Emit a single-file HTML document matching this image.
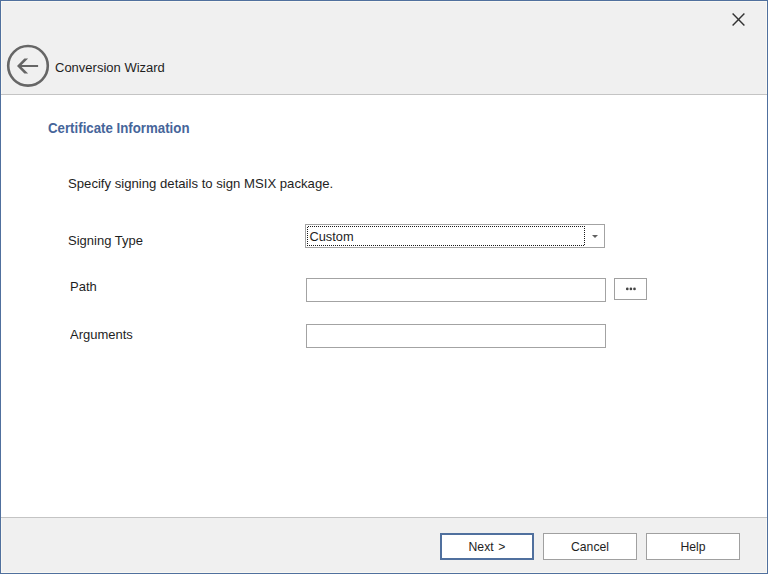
<!DOCTYPE html>
<html>
<head>
<meta charset="utf-8">
<style>
html,body{margin:0;padding:0;}
body{width:768px;height:574px;position:relative;overflow:hidden;background:#f0f0f0;font-family:"Liberation Sans",sans-serif;color:#1e1e1e;}
.abs{position:absolute;}
#frame{left:0;top:0;width:766px;height:572px;border:1px solid #50709e;}
#inner{left:1px;top:1px;width:766px;height:572px;border:1px solid #f9f8f3;box-sizing:border-box;}
#header{left:2px;top:2px;width:764px;height:92px;background:#f0f0f0;}
#sep1{left:1px;top:94px;width:766px;height:1px;background:#c4c4c4;}
#content{left:1px;top:95px;width:766px;height:422px;background:#ffffff;}
#sep2{left:1px;top:517px;width:766px;height:1px;background:#c4c4c4;}
.t{position:absolute;white-space:nowrap;font-size:13px;line-height:15px;}
.box{position:absolute;box-sizing:border-box;border:1px solid #a3a3a3;background:#fff;}
.btn{position:absolute;box-sizing:border-box;border:1px solid #a0a0a0;background:#fff;font-size:12.2px;text-align:center;}
</style>
</head>
<body>
<div id="frame" class="abs"></div>
<div id="inner" class="abs"></div>
<div id="sep1" class="abs"></div>
<div id="content" class="abs"></div>
<div id="sep2" class="abs"></div>

<!-- back icon -->
<svg class="abs" style="left:0;top:38px" width="56" height="56" viewBox="0 38 56 56">
  <circle cx="28" cy="65.8" r="19.8" fill="none" stroke="#666" stroke-width="2.6"/>
  <path d="M18 65 L38.1 65 L38.1 67 L18 67 Z M24.4 58.6 L28.1 58.6 L20.6 66 L28.1 73.4 L24.4 73.4 L17 66 Z" fill="#666"/>
</svg>
<div class="t" style="left:55px;top:59.6px;font-size:13.7px;transform:scaleX(0.95);transform-origin:0 0;">Conversion Wizard</div>

<!-- close -->
<svg class="abs" style="left:726px;top:8px" width="24" height="24" viewBox="726 8 24 24">
  <path d="M732.6 13.6 L744.4 25.4 M744.4 13.6 L732.6 25.4" fill="none" stroke="#333" stroke-width="1.45"/>
</svg>

<div class="t" style="left:47.5px;top:121px;font-size:14.2px;font-weight:bold;color:#46659a;transform:scaleX(0.935);transform-origin:0 0;">Certificate Information</div>
<div class="t" style="left:68px;top:176px;font-size:13.15px;">Specify signing details to sign MSIX package.</div>

<div class="t" style="left:68px;top:233px;font-size:13.6px;transform:scaleX(0.956);transform-origin:0 0;">Signing Type</div>
<div class="t" style="left:70px;top:279px;font-size:13.6px;transform:scaleX(0.956);transform-origin:0 0;">Path</div>
<div class="t" style="left:70px;top:327px;font-size:13.6px;transform:scaleX(0.956);transform-origin:0 0;">Arguments</div>

<!-- combobox -->
<div class="box" style="left:305px;top:224px;width:300px;height:24px;"></div>
<svg class="abs" style="left:300px;top:220px" width="290" height="30" viewBox="300 220 290 30"><path d="M307 227h1v1h-1zM307 229h1v1h-1zM307 231h1v1h-1zM307 233h1v1h-1zM307 235h1v1h-1zM307 237h1v1h-1zM307 239h1v1h-1zM307 241h1v1h-1zM307 243h1v1h-1zM307 245h1v1h-1zM308 226h1v1h-1zM309 245h1v1h-1zM310 226h1v1h-1zM311 245h1v1h-1zM312 226h1v1h-1zM313 245h1v1h-1zM314 226h1v1h-1zM315 245h1v1h-1zM316 226h1v1h-1zM317 245h1v1h-1zM318 226h1v1h-1zM319 245h1v1h-1zM320 226h1v1h-1zM321 245h1v1h-1zM322 226h1v1h-1zM323 245h1v1h-1zM324 226h1v1h-1zM325 245h1v1h-1zM326 226h1v1h-1zM327 245h1v1h-1zM328 226h1v1h-1zM329 245h1v1h-1zM330 226h1v1h-1zM331 245h1v1h-1zM332 226h1v1h-1zM333 245h1v1h-1zM334 226h1v1h-1zM335 245h1v1h-1zM336 226h1v1h-1zM337 245h1v1h-1zM338 226h1v1h-1zM339 245h1v1h-1zM340 226h1v1h-1zM341 245h1v1h-1zM342 226h1v1h-1zM343 245h1v1h-1zM344 226h1v1h-1zM345 245h1v1h-1zM346 226h1v1h-1zM347 245h1v1h-1zM348 226h1v1h-1zM349 245h1v1h-1zM350 226h1v1h-1zM351 245h1v1h-1zM352 226h1v1h-1zM353 245h1v1h-1zM354 226h1v1h-1zM355 245h1v1h-1zM356 226h1v1h-1zM357 245h1v1h-1zM358 226h1v1h-1zM359 245h1v1h-1zM360 226h1v1h-1zM361 245h1v1h-1zM362 226h1v1h-1zM363 245h1v1h-1zM364 226h1v1h-1zM365 245h1v1h-1zM366 226h1v1h-1zM367 245h1v1h-1zM368 226h1v1h-1zM369 245h1v1h-1zM370 226h1v1h-1zM371 245h1v1h-1zM372 226h1v1h-1zM373 245h1v1h-1zM374 226h1v1h-1zM375 245h1v1h-1zM376 226h1v1h-1zM377 245h1v1h-1zM378 226h1v1h-1zM379 245h1v1h-1zM380 226h1v1h-1zM381 245h1v1h-1zM382 226h1v1h-1zM383 245h1v1h-1zM384 226h1v1h-1zM385 245h1v1h-1zM386 226h1v1h-1zM387 245h1v1h-1zM388 226h1v1h-1zM389 245h1v1h-1zM390 226h1v1h-1zM391 245h1v1h-1zM392 226h1v1h-1zM393 245h1v1h-1zM394 226h1v1h-1zM395 245h1v1h-1zM396 226h1v1h-1zM397 245h1v1h-1zM398 226h1v1h-1zM399 245h1v1h-1zM400 226h1v1h-1zM401 245h1v1h-1zM402 226h1v1h-1zM403 245h1v1h-1zM404 226h1v1h-1zM405 245h1v1h-1zM406 226h1v1h-1zM407 245h1v1h-1zM408 226h1v1h-1zM409 245h1v1h-1zM410 226h1v1h-1zM411 245h1v1h-1zM412 226h1v1h-1zM413 245h1v1h-1zM414 226h1v1h-1zM415 245h1v1h-1zM416 226h1v1h-1zM417 245h1v1h-1zM418 226h1v1h-1zM419 245h1v1h-1zM420 226h1v1h-1zM421 245h1v1h-1zM422 226h1v1h-1zM423 245h1v1h-1zM424 226h1v1h-1zM425 245h1v1h-1zM426 226h1v1h-1zM427 245h1v1h-1zM428 226h1v1h-1zM429 245h1v1h-1zM430 226h1v1h-1zM431 245h1v1h-1zM432 226h1v1h-1zM433 245h1v1h-1zM434 226h1v1h-1zM435 245h1v1h-1zM436 226h1v1h-1zM437 245h1v1h-1zM438 226h1v1h-1zM439 245h1v1h-1zM440 226h1v1h-1zM441 245h1v1h-1zM442 226h1v1h-1zM443 245h1v1h-1zM444 226h1v1h-1zM445 245h1v1h-1zM446 226h1v1h-1zM447 245h1v1h-1zM448 226h1v1h-1zM449 245h1v1h-1zM450 226h1v1h-1zM451 245h1v1h-1zM452 226h1v1h-1zM453 245h1v1h-1zM454 226h1v1h-1zM455 245h1v1h-1zM456 226h1v1h-1zM457 245h1v1h-1zM458 226h1v1h-1zM459 245h1v1h-1zM460 226h1v1h-1zM461 245h1v1h-1zM462 226h1v1h-1zM463 245h1v1h-1zM464 226h1v1h-1zM465 245h1v1h-1zM466 226h1v1h-1zM467 245h1v1h-1zM468 226h1v1h-1zM469 245h1v1h-1zM470 226h1v1h-1zM471 245h1v1h-1zM472 226h1v1h-1zM473 245h1v1h-1zM474 226h1v1h-1zM475 245h1v1h-1zM476 226h1v1h-1zM477 245h1v1h-1zM478 226h1v1h-1zM479 245h1v1h-1zM480 226h1v1h-1zM481 245h1v1h-1zM482 226h1v1h-1zM483 245h1v1h-1zM484 226h1v1h-1zM485 245h1v1h-1zM486 226h1v1h-1zM487 245h1v1h-1zM488 226h1v1h-1zM489 245h1v1h-1zM490 226h1v1h-1zM491 245h1v1h-1zM492 226h1v1h-1zM493 245h1v1h-1zM494 226h1v1h-1zM495 245h1v1h-1zM496 226h1v1h-1zM497 245h1v1h-1zM498 226h1v1h-1zM499 245h1v1h-1zM500 226h1v1h-1zM501 245h1v1h-1zM502 226h1v1h-1zM503 245h1v1h-1zM504 226h1v1h-1zM505 245h1v1h-1zM506 226h1v1h-1zM507 245h1v1h-1zM508 226h1v1h-1zM509 245h1v1h-1zM510 226h1v1h-1zM511 245h1v1h-1zM512 226h1v1h-1zM513 245h1v1h-1zM514 226h1v1h-1zM515 245h1v1h-1zM516 226h1v1h-1zM517 245h1v1h-1zM518 226h1v1h-1zM519 245h1v1h-1zM520 226h1v1h-1zM521 245h1v1h-1zM522 226h1v1h-1zM523 245h1v1h-1zM524 226h1v1h-1zM525 245h1v1h-1zM526 226h1v1h-1zM527 245h1v1h-1zM528 226h1v1h-1zM529 245h1v1h-1zM530 226h1v1h-1zM531 245h1v1h-1zM532 226h1v1h-1zM533 245h1v1h-1zM534 226h1v1h-1zM535 245h1v1h-1zM536 226h1v1h-1zM537 245h1v1h-1zM538 226h1v1h-1zM539 245h1v1h-1zM540 226h1v1h-1zM541 245h1v1h-1zM542 226h1v1h-1zM543 245h1v1h-1zM544 226h1v1h-1zM545 245h1v1h-1zM546 226h1v1h-1zM547 245h1v1h-1zM548 226h1v1h-1zM549 245h1v1h-1zM550 226h1v1h-1zM551 245h1v1h-1zM552 226h1v1h-1zM553 245h1v1h-1zM554 226h1v1h-1zM555 245h1v1h-1zM556 226h1v1h-1zM557 245h1v1h-1zM558 226h1v1h-1zM559 245h1v1h-1zM560 226h1v1h-1zM561 245h1v1h-1zM562 226h1v1h-1zM563 245h1v1h-1zM564 226h1v1h-1zM565 245h1v1h-1zM566 226h1v1h-1zM567 245h1v1h-1zM568 226h1v1h-1zM569 245h1v1h-1zM570 226h1v1h-1zM571 245h1v1h-1zM572 226h1v1h-1zM573 245h1v1h-1zM574 226h1v1h-1zM575 245h1v1h-1zM576 226h1v1h-1zM577 245h1v1h-1zM578 226h1v1h-1zM579 245h1v1h-1zM580 226h1v1h-1zM581 245h1v1h-1zM582 226h1v1h-1zM583 245h1v1h-1zM584 226h1v1h-1zM584 228h1v1h-1zM584 230h1v1h-1zM584 232h1v1h-1zM584 234h1v1h-1zM584 236h1v1h-1zM584 238h1v1h-1zM584 240h1v1h-1zM584 242h1v1h-1zM584 244h1v1h-1z" fill="#1a1a1a" shape-rendering="crispEdges"/></svg>
<div class="t" style="left:309.5px;top:229px;font-size:12.8px;">Custom</div>
<svg class="abs" style="left:586px;top:228px" width="18" height="16" viewBox="586 228 18 16"><path d="M592 235 L598 235 L595 238 Z" fill="#606060"/></svg>

<!-- path -->
<div class="box" style="left:306px;top:278px;width:300px;height:24px;"></div>
<div class="btn" style="left:614px;top:278px;width:33px;height:22px;"></div>
<svg class="abs" style="left:620px;top:282px" width="22" height="14" viewBox="620 282 22 14"><circle cx="627.3" cy="288.9" r="1.35" fill="#444"/><circle cx="630.9" cy="288.9" r="1.35" fill="#444"/><circle cx="634.5" cy="288.9" r="1.35" fill="#444"/></svg>

<!-- arguments -->
<div class="box" style="left:306px;top:324px;width:300px;height:24px;"></div>

<!-- buttons -->
<div class="btn" style="left:440px;top:533px;width:94px;height:27px;border:2px solid #50709e;line-height:25px;word-spacing:1.3px;">Next &gt;</div>
<div class="btn" style="left:543px;top:533px;width:94px;height:27px;line-height:27px;">Cancel</div>
<div class="btn" style="left:646px;top:533px;width:94px;height:27px;line-height:27px;">Help</div>
</body>
</html>
